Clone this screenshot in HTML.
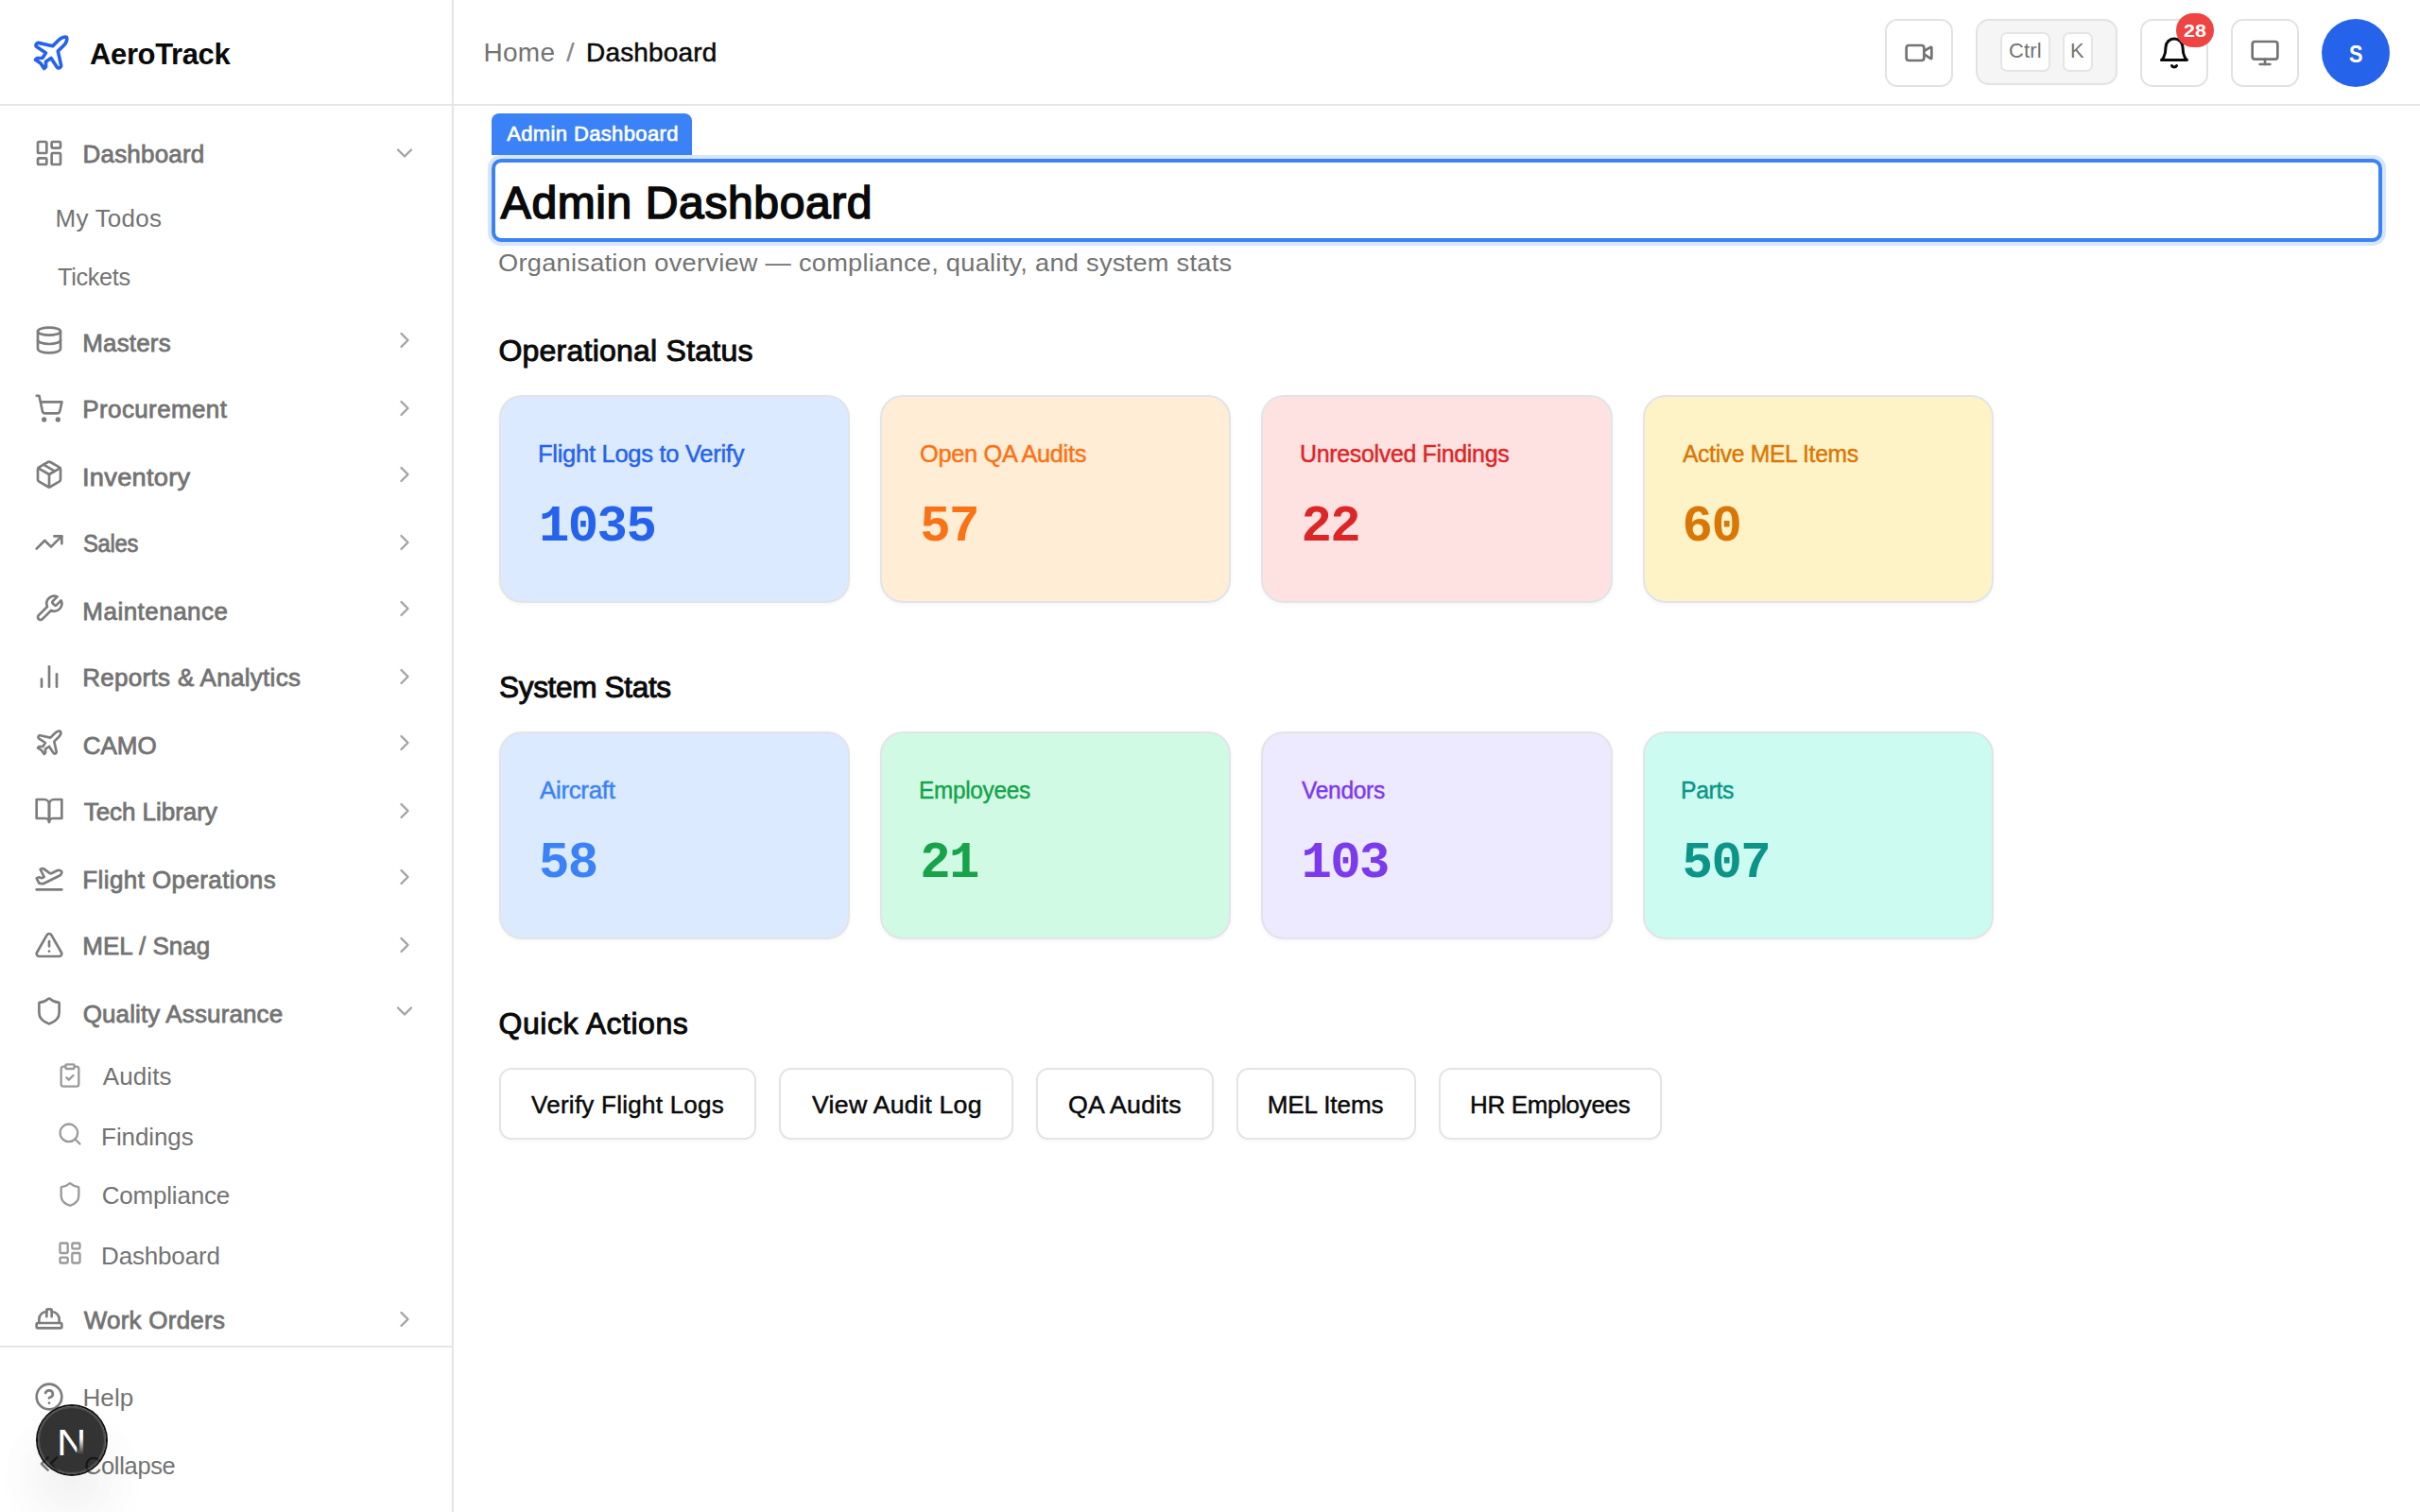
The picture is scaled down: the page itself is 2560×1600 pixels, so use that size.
<!DOCTYPE html>
<html lang="en">
<head>
<meta charset="utf-8">
<meta name="viewport" content="width=2560">
<title>AeroTrack — Admin Dashboard</title>
<style>
html,body{margin:0;padding:0;background:#fff}
body{width:2560px;height:1600px;overflow:hidden;font-family:"Liberation Sans",sans-serif}
#app{position:relative;width:2560px;height:1600px;overflow:hidden;background:#fff}
.t{position:absolute;line-height:1;white-space:pre;margin:0;font-weight:400;text-decoration:none}
.ic{position:absolute;display:block;overflow:visible}
button{padding:0;margin:0;font:inherit;color:inherit;text-align:left;cursor:pointer}
kbd{font:inherit}
a{color:inherit;text-decoration:none}
.ln{position:absolute;background:#e5e5e5}
.hb{position:absolute;box-sizing:border-box;width:72px;height:72px;top:20px;border:2px solid #e2e2e2;border-radius:13px;background:#fff}
.kbd{position:absolute;box-sizing:border-box;top:34px;height:42px;border:2px solid #e5e5e5;border-radius:7px;background:#fff}
.card{position:absolute;box-sizing:border-box;width:371.2px;height:220px;border:2px solid #e2e4e8;border-radius:24px;box-shadow:0 2px 4px rgba(0,0,0,.04)}
.qa{position:absolute;box-sizing:border-box;top:1130px;height:76px;border:2px solid #e4e4e4;border-radius:13px;background:#fff;box-shadow:0 2px 3px rgba(0,0,0,.03)}
</style>
</head>
<body>
<div id="app">
<aside>
<div class="ln" style="left:478px;top:0;width:2px;height:1600px"></div>
<div class="brand"><svg class="ic" style="left:32px;top:34px" width="44" height="44" viewBox="0 0 24 24" fill="none" stroke="#2563eb" stroke-width="2" stroke-linecap="round" stroke-linejoin="round"><path d="M17.8 19.2 16 11l3.5-3.5C21 6 21.5 4 21 3c-1-.5-3 0-4.5 1.5L13 8 4.8 6.2c-.5-.1-.9.1-1.1.5l-.3.5c-.2.5-.1 1 .3 1.3L9 12l-2 3H4l-1 1 3 2 2 3 1-1v-3l3-2 3.5 5.3c.3.4.8.5 1.3.3l.5-.2c.4-.3.6-.7.5-1.2z"/></svg><span class="t" style="left:95.4px;top:40.7px;font-size:32px;letter-spacing:-0.38px;color:#0a0a0a;font-family:'Liberation Sans',sans-serif;font-weight:700;transform:scaleX(0.9691);transform-origin:0 0;">AeroTrack</span></div>
<nav>
<a><svg class="ic" style="left:36px;top:146px" width="32" height="32" viewBox="0 0 24 24" fill="none" stroke="#7d7d7d" stroke-width="2" stroke-linecap="round" stroke-linejoin="round"><rect width="7" height="9" x="3" y="3" rx="1"/><rect width="7" height="5" x="14" y="3" rx="1"/><rect width="7" height="9" x="14" y="12" rx="1"/><rect width="7" height="5" x="3" y="16" rx="1"/></svg><span class="t" style="left:87.5px;top:150.0px;font-size:26px;letter-spacing:0.20px;color:#737373;font-family:'Liberation Sans',sans-serif;-webkit-text-stroke:0.78px currentColor;">Dashboard</span><svg class="ic" style="left:414px;top:148px" width="28" height="28" viewBox="0 0 24 24" fill="none" stroke="#a3a3a3" stroke-width="2" stroke-linecap="round" stroke-linejoin="round"><path d="m6 9 6 6 6-6"/></svg></a>
<a><span class="t" style="left:58.5px;top:218.0px;font-size:26px;letter-spacing:0.24px;color:#737373;font-family:'Liberation Sans',sans-serif;">My Todos</span></a>
<a><span class="t" style="left:60.5px;top:279.5px;font-size:26px;letter-spacing:-0.31px;color:#737373;font-family:'Liberation Sans',sans-serif;transform:scaleX(0.9706);transform-origin:0 0;">Tickets</span></a>
<a><svg class="ic" style="left:36px;top:344px" width="32" height="32" viewBox="0 0 24 24" fill="none" stroke="#7d7d7d" stroke-width="2" stroke-linecap="round" stroke-linejoin="round"><ellipse cx="12" cy="5" rx="9" ry="3"/><path d="M3 5V19A9 3 0 0 0 21 19V5"/><path d="M3 12A9 3 0 0 0 21 12"/></svg><span class="t" style="left:87.3px;top:350.0px;font-size:26px;letter-spacing:0.15px;color:#737373;font-family:'Liberation Sans',sans-serif;-webkit-text-stroke:0.78px currentColor;">Masters</span><svg class="ic" style="left:414px;top:346px" width="28" height="28" viewBox="0 0 24 24" fill="none" stroke="#a3a3a3" stroke-width="2" stroke-linecap="round" stroke-linejoin="round"><path d="m9 18 6-6-6-6"/></svg></a>
<a><svg class="ic" style="left:36px;top:416px" width="32" height="32" viewBox="0 0 24 24" fill="none" stroke="#7d7d7d" stroke-width="2" stroke-linecap="round" stroke-linejoin="round"><circle cx="8" cy="21" r="1"/><circle cx="19" cy="21" r="1"/><path d="M2.05 2.05h2l2.66 12.42a2 2 0 0 0 2 1.58h9.78a2 2 0 0 0 1.95-1.57l1.65-7.43H5.12"/></svg><span class="t" style="left:87.3px;top:420.0px;font-size:26px;letter-spacing:0.38px;color:#737373;font-family:'Liberation Sans',sans-serif;-webkit-text-stroke:0.78px currentColor;">Procurement</span><svg class="ic" style="left:414px;top:418px" width="28" height="28" viewBox="0 0 24 24" fill="none" stroke="#a3a3a3" stroke-width="2" stroke-linecap="round" stroke-linejoin="round"><path d="m9 18 6-6-6-6"/></svg></a>
<a><svg class="ic" style="left:36px;top:486px" width="32" height="32" viewBox="0 0 24 24" fill="none" stroke="#7d7d7d" stroke-width="2" stroke-linecap="round" stroke-linejoin="round"><path d="m7.5 4.27 9 5.15"/><path d="M21 8a2 2 0 0 0-1-1.73l-7-4a2 2 0 0 0-2 0l-7 4A2 2 0 0 0 3 8v8a2 2 0 0 0 1 1.73l7 4a2 2 0 0 0 2 0l7-4A2 2 0 0 0 21 16Z"/><path d="m3.3 7 8.7 5 8.7-5"/><path d="M12 22V12"/></svg><span class="t" style="left:87.2px;top:492.0px;font-size:26px;letter-spacing:0.26px;color:#737373;font-family:'Liberation Sans',sans-serif;-webkit-text-stroke:0.78px currentColor;transform:scaleX(1.0469);transform-origin:0 0;">Inventory</span><svg class="ic" style="left:414px;top:488px" width="28" height="28" viewBox="0 0 24 24" fill="none" stroke="#a3a3a3" stroke-width="2" stroke-linecap="round" stroke-linejoin="round"><path d="m9 18 6-6-6-6"/></svg></a>
<a><svg class="ic" style="left:36px;top:558px" width="32" height="32" viewBox="0 0 24 24" fill="none" stroke="#7d7d7d" stroke-width="2" stroke-linecap="round" stroke-linejoin="round"><polyline points="22 7 13.5 15.5 8.5 10.5 2 17"/><polyline points="16 7 22 7 22 13"/></svg><span class="t" style="left:88.4px;top:561.5px;font-size:26px;letter-spacing:-0.31px;color:#737373;font-family:'Liberation Sans',sans-serif;-webkit-text-stroke:0.78px currentColor;transform:scaleX(0.9163);transform-origin:0 0;">Sales</span><svg class="ic" style="left:414px;top:560px" width="28" height="28" viewBox="0 0 24 24" fill="none" stroke="#a3a3a3" stroke-width="2" stroke-linecap="round" stroke-linejoin="round"><path d="m9 18 6-6-6-6"/></svg></a>
<a><svg class="ic" style="left:36px;top:628px" width="32" height="32" viewBox="0 0 24 24" fill="none" stroke="#7d7d7d" stroke-width="2" stroke-linecap="round" stroke-linejoin="round"><path d="M14.7 6.3a1 1 0 0 0 0 1.4l1.6 1.6a1 1 0 0 0 1.4 0l3.77-3.77a6 6 0 0 1-7.94 7.94l-6.91 6.91a2.12 2.12 0 0 1-3-3l6.91-6.91a6 6 0 0 1 7.94-7.94l-3.76 3.76z"/></svg><span class="t" style="left:87.3px;top:633.5px;font-size:26px;letter-spacing:0.48px;color:#737373;font-family:'Liberation Sans',sans-serif;-webkit-text-stroke:0.78px currentColor;">Maintenance</span><svg class="ic" style="left:414px;top:630px" width="28" height="28" viewBox="0 0 24 24" fill="none" stroke="#a3a3a3" stroke-width="2" stroke-linecap="round" stroke-linejoin="round"><path d="m9 18 6-6-6-6"/></svg></a>
<a><svg class="ic" style="left:36px;top:700px" width="32" height="32" viewBox="0 0 24 24" fill="none" stroke="#7d7d7d" stroke-width="2" stroke-linecap="round" stroke-linejoin="round"><line x1="18" x2="18" y1="20" y2="10"/><line x1="12" x2="12" y1="20" y2="4"/><line x1="6" x2="6" y1="20" y2="14"/></svg><span class="t" style="left:87.3px;top:704.0px;font-size:26px;letter-spacing:0.29px;color:#737373;font-family:'Liberation Sans',sans-serif;-webkit-text-stroke:0.78px currentColor;">Reports &amp; Analytics</span><svg class="ic" style="left:414px;top:702px" width="28" height="28" viewBox="0 0 24 24" fill="none" stroke="#a3a3a3" stroke-width="2" stroke-linecap="round" stroke-linejoin="round"><path d="m9 18 6-6-6-6"/></svg></a>
<a><svg class="ic" style="left:36px;top:770px" width="32" height="32" viewBox="0 0 24 24" fill="none" stroke="#7d7d7d" stroke-width="2" stroke-linecap="round" stroke-linejoin="round"><path d="M17.8 19.2 16 11l3.5-3.5C21 6 21.5 4 21 3c-1-.5-3 0-4.5 1.5L13 8 4.8 6.2c-.5-.1-.9.1-1.1.5l-.3.5c-.2.5-.1 1 .3 1.3L9 12l-2 3H4l-1 1 3 2 2 3 1-1v-3l3-2 3.5 5.3c.3.4.8.5 1.3.3l.5-.2c.4-.3.6-.7.5-1.2z"/></svg><span class="t" style="left:87.7px;top:775.5px;font-size:26px;letter-spacing:-0.00px;color:#737373;font-family:'Liberation Sans',sans-serif;-webkit-text-stroke:0.78px currentColor;">CAMO</span><svg class="ic" style="left:414px;top:772px" width="28" height="28" viewBox="0 0 24 24" fill="none" stroke="#a3a3a3" stroke-width="2" stroke-linecap="round" stroke-linejoin="round"><path d="m9 18 6-6-6-6"/></svg></a>
<a><svg class="ic" style="left:36px;top:842px" width="32" height="32" viewBox="0 0 24 24" fill="none" stroke="#7d7d7d" stroke-width="2" stroke-linecap="round" stroke-linejoin="round"><path d="M2 3h6a4 4 0 0 1 4 4v14a3 3 0 0 0-3-3H2z"/><path d="M22 3h-6a4 4 0 0 0-4 4v14a3 3 0 0 1 3-3h7z"/></svg><span class="t" style="left:88.7px;top:845.5px;font-size:26px;letter-spacing:-0.05px;color:#737373;font-family:'Liberation Sans',sans-serif;-webkit-text-stroke:0.78px currentColor;">Tech Library</span><svg class="ic" style="left:414px;top:844px" width="28" height="28" viewBox="0 0 24 24" fill="none" stroke="#a3a3a3" stroke-width="2" stroke-linecap="round" stroke-linejoin="round"><path d="m9 18 6-6-6-6"/></svg></a>
<a><svg class="ic" style="left:36px;top:912px" width="32" height="32" viewBox="0 0 24 24" fill="none" stroke="#7d7d7d" stroke-width="2" stroke-linecap="round" stroke-linejoin="round"><path d="M2 22h20"/><path d="M6.36 17.4 4 17l-2-4 1.1-.55a2 2 0 0 1 1.8 0l.17.1a2 2 0 0 0 1.8 0L8 12 5 6l.9-.45a2 2 0 0 1 2.09.2l4.02 3a2 2 0 0 0 2.1.2l4.19-2.06a2.41 2.41 0 0 1 1.73-.17L21 7a1.4 1.4 0 0 1 .87 1.99l-.38.76c-.23.46-.6.84-1.07 1.08L7.58 17.2a2 2 0 0 1-1.22.18Z"/></svg><span class="t" style="left:87.3px;top:917.5px;font-size:26px;letter-spacing:0.40px;color:#737373;font-family:'Liberation Sans',sans-serif;-webkit-text-stroke:0.78px currentColor;">Flight Operations</span><svg class="ic" style="left:414px;top:914px" width="28" height="28" viewBox="0 0 24 24" fill="none" stroke="#a3a3a3" stroke-width="2" stroke-linecap="round" stroke-linejoin="round"><path d="m9 18 6-6-6-6"/></svg></a>
<a><svg class="ic" style="left:36px;top:984px" width="32" height="32" viewBox="0 0 24 24" fill="none" stroke="#7d7d7d" stroke-width="2" stroke-linecap="round" stroke-linejoin="round"><path d="m21.73 18-8-14a2 2 0 0 0-3.48 0l-8 14A2 2 0 0 0 4 21h16a2 2 0 0 0 1.73-3"/><path d="M12 9v4"/><path d="M12 17h.01"/></svg><span class="t" style="left:87.3px;top:987.7px;font-size:26px;letter-spacing:-0.01px;color:#737373;font-family:'Liberation Sans',sans-serif;-webkit-text-stroke:0.78px currentColor;">MEL / Snag</span><svg class="ic" style="left:414px;top:986px" width="28" height="28" viewBox="0 0 24 24" fill="none" stroke="#a3a3a3" stroke-width="2" stroke-linecap="round" stroke-linejoin="round"><path d="m9 18 6-6-6-6"/></svg></a>
<a><svg class="ic" style="left:36px;top:1054px" width="32" height="32" viewBox="0 0 24 24" fill="none" stroke="#7d7d7d" stroke-width="2" stroke-linecap="round" stroke-linejoin="round"><path d="M20 13c0 5-3.5 7.5-7.66 8.95a1 1 0 0 1-.67-.01C7.5 20.5 4 18 4 13V6a1 1 0 0 1 1-1c2 0 4.5-1.2 6.24-2.72a1.17 1.17 0 0 1 1.52 0C14.51 3.81 17 5 19 5a1 1 0 0 1 1 1z"/></svg><span class="t" style="left:87.7px;top:1060.0px;font-size:26px;letter-spacing:0.12px;color:#737373;font-family:'Liberation Sans',sans-serif;-webkit-text-stroke:0.78px currentColor;">Quality Assurance</span><svg class="ic" style="left:414px;top:1056px" width="28" height="28" viewBox="0 0 24 24" fill="none" stroke="#a3a3a3" stroke-width="2" stroke-linecap="round" stroke-linejoin="round"><path d="m6 9 6 6 6-6"/></svg></a>
<a><svg class="ic" style="left:60px;top:1124px" width="28" height="28" viewBox="0 0 24 24" fill="none" stroke="#9a9a9a" stroke-width="2" stroke-linecap="round" stroke-linejoin="round"><rect width="8" height="4" x="8" y="2" rx="1" ry="1"/><path d="M16 4h2a2 2 0 0 1 2 2v14a2 2 0 0 1-2 2H6a2 2 0 0 1-2-2V6a2 2 0 0 1 2-2h2"/><path d="m9 14 2 2 4-4"/></svg><span class="t" style="left:108.7px;top:1125.6px;font-size:26px;letter-spacing:0.10px;color:#737373;font-family:'Liberation Sans',sans-serif;">Audits</span></a>
<a><svg class="ic" style="left:60px;top:1186px" width="28" height="28" viewBox="0 0 24 24" fill="none" stroke="#9a9a9a" stroke-width="2" stroke-linecap="round" stroke-linejoin="round"><circle cx="11" cy="11" r="8"/><path d="m21 21-4.3-4.3"/></svg><span class="t" style="left:107.1px;top:1189.7px;font-size:26px;letter-spacing:-0.10px;color:#737373;font-family:'Liberation Sans',sans-serif;">Findings</span></a>
<a><svg class="ic" style="left:60px;top:1250px" width="28" height="28" viewBox="0 0 24 24" fill="none" stroke="#9a9a9a" stroke-width="2" stroke-linecap="round" stroke-linejoin="round"><path d="M20 13c0 5-3.5 7.5-7.66 8.95a1 1 0 0 1-.67-.01C7.5 20.5 4 18 4 13V6a1 1 0 0 1 1-1c2 0 4.5-1.2 6.24-2.72a1.17 1.17 0 0 1 1.52 0C14.51 3.81 17 5 19 5a1 1 0 0 1 1 1z"/></svg><span class="t" style="left:107.7px;top:1252.0px;font-size:26px;letter-spacing:-0.19px;color:#737373;font-family:'Liberation Sans',sans-serif;">Compliance</span></a>
<a><svg class="ic" style="left:60px;top:1312px" width="28" height="28" viewBox="0 0 24 24" fill="none" stroke="#9a9a9a" stroke-width="2" stroke-linecap="round" stroke-linejoin="round"><rect width="7" height="9" x="3" y="3" rx="1"/><rect width="7" height="5" x="14" y="3" rx="1"/><rect width="7" height="9" x="14" y="12" rx="1"/><rect width="7" height="5" x="3" y="16" rx="1"/></svg><span class="t" style="left:107.1px;top:1315.5px;font-size:26px;letter-spacing:-0.18px;color:#737373;font-family:'Liberation Sans',sans-serif;">Dashboard</span></a>
<a><svg class="ic" style="left:36px;top:1380px" width="32" height="32" viewBox="0 0 24 24" fill="none" stroke="#7d7d7d" stroke-width="2" stroke-linecap="round" stroke-linejoin="round"><path d="M10 10V5a1 1 0 0 1 1-1h2a1 1 0 0 1 1 1v5"/><path d="M14 6a6 6 0 0 1 6 6v3"/><path d="M4 15v-3a6 6 0 0 1 6-6"/><rect x="2" y="15" width="20" height="4" rx="1"/></svg><span class="t" style="left:88.7px;top:1383.6px;font-size:26px;letter-spacing:0.24px;color:#737373;font-family:'Liberation Sans',sans-serif;-webkit-text-stroke:0.78px currentColor;">Work Orders</span><svg class="ic" style="left:414px;top:1382px" width="28" height="28" viewBox="0 0 24 24" fill="none" stroke="#a3a3a3" stroke-width="2" stroke-linecap="round" stroke-linejoin="round"><path d="m9 18 6-6-6-6"/></svg></a>
</nav>
<div class="ln" style="left:0;top:1424px;width:478px;height:2px"></div>
<div class="foot"><a><svg class="ic" style="left:36px;top:1462px" width="32" height="32" viewBox="0 0 24 24" fill="none" stroke="#7d7d7d" stroke-width="2" stroke-linecap="round" stroke-linejoin="round"><circle cx="12" cy="12" r="10"/><path d="M9.09 9a3 3 0 0 1 5.83 1c0 2-3 3-3 3"/><path d="M12 17h.01"/></svg><span class="t" style="left:87.5px;top:1466.0px;font-size:26px;letter-spacing:0.07px;color:#737373;font-family:'Liberation Sans',sans-serif;">Help</span></a>
<a><svg class="ic" style="left:36px;top:1533px" width="32" height="32" viewBox="0 0 24 24" fill="none" stroke="#7d7d7d" stroke-width="2" stroke-linecap="round" stroke-linejoin="round"><path d="m11 17-5-5 5-5"/><path d="m18 17-5-5 5-5"/></svg><span class="t" style="left:88.5px;top:1537.5px;font-size:26px;letter-spacing:-0.31px;color:#737373;font-family:'Liberation Sans',sans-serif;transform:scaleX(0.9771);transform-origin:0 0;">Collapse</span></a>
</div>
</aside>
<header>
<div class="ln" style="left:0;top:110px;width:2560px;height:2px"></div>
<div class="crumbs"><span class="t" style="left:511.6px;top:42.1px;font-size:28px;letter-spacing:0.23px;color:#737373;font-family:'Liberation Sans',sans-serif;">Home</span><span class="t" style="left:599.0px;top:42.1px;font-size:28px;letter-spacing:0.00px;color:#8a8a8a;font-family:'Liberation Sans',sans-serif;transform:scaleX(1.1250);transform-origin:0 0;">/</span><span class="t" style="left:620.1px;top:42.1px;font-size:28px;letter-spacing:0.16px;color:#0a0a0a;font-family:'Liberation Sans',sans-serif;-webkit-text-stroke:0.50px currentColor;">Dashboard</span></div>
<button class="hb" style="left:1994px"><svg class="ic" style="left:18px;top:18px" width="32" height="32" viewBox="0 0 24 24" fill="none" stroke="#737373" stroke-width="2" stroke-linecap="round" stroke-linejoin="round"><path d="m16 13 5.223 3.482a.5.5 0 0 0 .777-.416V7.87a.5.5 0 0 0-.752-.432L16 10.5"/><rect x="2" y="6" width="14" height="12" rx="2"/></svg></button>
<div class="hb" style="left:2090px;width:150px;height:70px;background:#f5f5f5;border-color:#e3e3e3;border-radius:14px"></div><kbd class="kbd" style="left:2116px;width:53px"><span class="t" style="left:7.0px;top:7.0px;font-size:22px;letter-spacing:0.17px;color:#737373;font-family:'Liberation Sans',sans-serif;">Ctrl</span></kbd><kbd class="kbd" style="left:2182px;width:32px"><span class="t" style="left:6.2px;top:7.0px;font-size:22px;letter-spacing:0.00px;color:#737373;font-family:'Liberation Sans',sans-serif;transform:scaleX(0.9917);transform-origin:0 0;">K</span></kbd>
<button class="hb" style="left:2264px"><svg class="ic" style="left:16px;top:16px" width="36" height="36" viewBox="0 0 24 24" fill="none" stroke="#0a0a0a" stroke-width="2" stroke-linecap="round" stroke-linejoin="round"><path d="M6 8a6 6 0 0 1 12 0c0 7 3 9 3 9H3s3-2 3-9"/><path d="M10.3 21a1.94 1.94 0 0 0 3.4 0"/></svg></button><div style="position:absolute;left:2302px;top:14px;width:40px;height:36px;border-radius:18px;background:#ef4444"><span class="t" style="left:7.9px;top:9.8px;font-size:18.5px;letter-spacing:0.18px;color:#fff;font-family:'Liberation Sans',sans-serif;font-weight:700;transform:scaleX(1.1572);transform-origin:0 0;">28</span></div>
<button class="hb" style="left:2360px"><svg class="ic" style="left:18px;top:18px" width="32" height="32" viewBox="0 0 24 24" fill="none" stroke="#737373" stroke-width="2" stroke-linecap="round" stroke-linejoin="round"><rect width="20" height="14" x="2" y="3" rx="2"/><line x1="8" x2="16" y1="21" y2="21"/><line x1="12" x2="12" y1="17" y2="21"/></svg></button>
<div style="position:absolute;left:2456px;top:20px;width:72px;height:72px;border-radius:50%;background:#2563eb"><span class="t" style="left:28.6px;top:24.5px;font-size:25px;letter-spacing:0.00px;color:#fff;font-family:'Liberation Sans',sans-serif;font-weight:700;transform:scaleX(0.8667);transform-origin:0 0;">S</span></div>
</header>
<main>
<div style="position:absolute;left:520px;top:120px;width:212px;height:44px;border-radius:8px 8px 0 0;background:#3b82f6"><span class="t" style="left:16.2px;top:11.0px;font-size:22px;letter-spacing:0.37px;color:#fff;font-family:'Liberation Sans',sans-serif;-webkit-text-stroke:0.66px currentColor;">Admin Dashboard</span></div>
<div style="position:absolute;box-sizing:border-box;left:520px;top:168px;width:2000px;height:88px;border:4px solid #3b82f6;border-radius:10px;box-shadow:0 0 0 4px rgba(59,130,246,.2)"></div>
<h1 class="t" style="left:529.8px;top:191.2px;font-size:48px;letter-spacing:0.61px;color:#0a0a0a;font-family:'Liberation Sans',sans-serif;-webkit-text-stroke:1.63px currentColor;">Admin Dashboard</h1>
<p class="t" style="left:527.4px;top:265.3px;font-size:26px;letter-spacing:0.26px;color:#737373;font-family:'Liberation Sans',sans-serif;transform:scaleX(1.0460);transform-origin:0 0;">Organisation overview — compliance, quality, and system stats</p>
<section><h2 class="t" style="left:527.4px;top:354.9px;font-size:32px;letter-spacing:0.24px;color:#0a0a0a;font-family:'Liberation Sans',sans-serif;-webkit-text-stroke:0.96px currentColor;">Operational Status</h2>
<div class="card" style="left:528.0px;top:418px;background:#dbeafe"><span class="t" style="left:39.0px;top:47.0px;font-size:26px;letter-spacing:-0.31px;color:#2563eb;font-family:'Liberation Sans',sans-serif;-webkit-text-stroke:0.47px currentColor;transform:scaleX(0.9834);transform-origin:0 0;">Flight Logs to Verify</span><span class="t" style="left:40.0px;top:110.9px;font-size:54px;letter-spacing:-1.60px;color:#2563eb;font-family:'Liberation Mono',monospace;font-weight:700;">1035</span></div>
<div class="card" style="left:931.2px;top:418px;background:#ffedd5"><span class="t" style="left:39.6px;top:47.0px;font-size:26px;letter-spacing:-0.31px;color:#f97316;font-family:'Liberation Sans',sans-serif;-webkit-text-stroke:0.47px currentColor;transform:scaleX(0.9742);transform-origin:0 0;">Open QA Audits</span><span class="t" style="left:40.0px;top:110.9px;font-size:54px;letter-spacing:-1.60px;color:#f97316;font-family:'Liberation Mono',monospace;font-weight:700;">57</span></div>
<div class="card" style="left:1334.4px;top:418px;background:#fee2e2"><span class="t" style="left:38.8px;top:47.0px;font-size:26px;letter-spacing:-0.31px;color:#dc2626;font-family:'Liberation Sans',sans-serif;-webkit-text-stroke:0.47px currentColor;transform:scaleX(0.9578);transform-origin:0 0;">Unresolved Findings</span><span class="t" style="left:40.0px;top:110.9px;font-size:54px;letter-spacing:-1.60px;color:#dc2626;font-family:'Liberation Mono',monospace;font-weight:700;">22</span></div>
<div class="card" style="left:1737.6px;top:418px;background:#fef3c7"><span class="t" style="left:40.4px;top:47.0px;font-size:26px;letter-spacing:-0.31px;color:#d97706;font-family:'Liberation Sans',sans-serif;-webkit-text-stroke:0.47px currentColor;transform:scaleX(0.9459);transform-origin:0 0;">Active MEL Items</span><span class="t" style="left:40.0px;top:110.9px;font-size:54px;letter-spacing:-1.60px;color:#d97706;font-family:'Liberation Mono',monospace;font-weight:700;">60</span></div>
</section>
<section><h2 class="t" style="left:528.0px;top:710.9px;font-size:32px;letter-spacing:-0.38px;color:#0a0a0a;font-family:'Liberation Sans',sans-serif;-webkit-text-stroke:0.96px currentColor;transform:scaleX(0.9881);transform-origin:0 0;">System Stats</h2>
<div class="card" style="left:528.0px;top:774px;background:#dbeafe"><span class="t" style="left:40.5px;top:47.0px;font-size:26px;letter-spacing:-0.31px;color:#3b82f6;font-family:'Liberation Sans',sans-serif;-webkit-text-stroke:0.47px currentColor;transform:scaleX(0.9961);transform-origin:0 0;">Aircraft</span><span class="t" style="left:40.0px;top:110.9px;font-size:54px;letter-spacing:-1.60px;color:#3b82f6;font-family:'Liberation Mono',monospace;font-weight:700;">58</span></div>
<div class="card" style="left:931.2px;top:774px;background:#d1fae5"><span class="t" style="left:38.7px;top:47.0px;font-size:26px;letter-spacing:-0.31px;color:#16a34a;font-family:'Liberation Sans',sans-serif;-webkit-text-stroke:0.47px currentColor;transform:scaleX(0.9360);transform-origin:0 0;">Employees</span><span class="t" style="left:40.0px;top:110.9px;font-size:54px;letter-spacing:-1.60px;color:#16a34a;font-family:'Liberation Mono',monospace;font-weight:700;">21</span></div>
<div class="card" style="left:1334.4px;top:774px;background:#ede9fe"><span class="t" style="left:40.7px;top:47.0px;font-size:26px;letter-spacing:-0.31px;color:#7c3aed;font-family:'Liberation Sans',sans-serif;-webkit-text-stroke:0.47px currentColor;transform:scaleX(0.9428);transform-origin:0 0;">Vendors</span><span class="t" style="left:40.0px;top:110.9px;font-size:54px;letter-spacing:-1.60px;color:#7c3aed;font-family:'Liberation Mono',monospace;font-weight:700;">103</span></div>
<div class="card" style="left:1737.6px;top:774px;background:#ccfbf1"><span class="t" style="left:38.5px;top:47.0px;font-size:26px;letter-spacing:-0.31px;color:#0d9488;font-family:'Liberation Sans',sans-serif;-webkit-text-stroke:0.47px currentColor;transform:scaleX(0.9480);transform-origin:0 0;">Parts</span><span class="t" style="left:40.0px;top:110.9px;font-size:54px;letter-spacing:-1.60px;color:#0d9488;font-family:'Liberation Mono',monospace;font-weight:700;">507</span></div>
</section>
<section><h2 class="t" style="left:527.6px;top:1066.9px;font-size:32px;letter-spacing:0.52px;color:#0a0a0a;font-family:'Liberation Sans',sans-serif;-webkit-text-stroke:0.96px currentColor;">Quick Actions</h2>
<button class="qa" style="left:528px;width:272px"><span class="t" style="left:32.1px;top:24.0px;font-size:26px;letter-spacing:0.25px;color:#0a0a0a;font-family:'Liberation Sans',sans-serif;-webkit-text-stroke:0.47px currentColor;">Verify Flight Logs</span></button>
<button class="qa" style="left:824px;width:247.5px"><span class="t" style="left:32.9px;top:24.0px;font-size:26px;letter-spacing:0.26px;color:#0a0a0a;font-family:'Liberation Sans',sans-serif;-webkit-text-stroke:0.47px currentColor;transform:scaleX(1.0266);transform-origin:0 0;">View Audit Log</span></button>
<button class="qa" style="left:1096px;width:187.5px"><span class="t" style="left:31.5px;top:24.0px;font-size:26px;letter-spacing:0.26px;color:#0a0a0a;font-family:'Liberation Sans',sans-serif;-webkit-text-stroke:0.47px currentColor;transform:scaleX(1.0288);transform-origin:0 0;">QA Audits</span></button>
<button class="qa" style="left:1308px;width:189.5px"><span class="t" style="left:30.7px;top:24.0px;font-size:26px;letter-spacing:-0.06px;color:#0a0a0a;font-family:'Liberation Sans',sans-serif;-webkit-text-stroke:0.47px currentColor;">MEL Items</span></button>
<button class="qa" style="left:1522px;width:236px"><span class="t" style="left:30.9px;top:24.0px;font-size:26px;letter-spacing:-0.31px;color:#0a0a0a;font-family:'Liberation Sans',sans-serif;-webkit-text-stroke:0.47px currentColor;transform:scaleX(0.9978);transform-origin:0 0;">HR Employees</span></button>
</section>
</main>
<div style="position:absolute;left:40px;top:1488px;width:72px;height:72px;border-radius:50%;background:rgba(0,0,0,.8);box-shadow:0 0 0 2px #111,inset 0 0 0 2px rgba(255,255,255,.14),0 32px 64px -16px rgba(0,0,0,.16),0 44px 64px 8px rgba(0,0,0,.03)"><span class="t" style="left:20.2px;top:19.2px;font-size:39px;letter-spacing:0.00px;color:#fff;font-family:'Liberation Sans',sans-serif;transform:scaleX(1.1136);transform-origin:0 0;">N</span></div><div style="position:absolute;left:81px;top:1522px;width:9px;height:20px;background:linear-gradient(to bottom,rgba(51,51,51,0),#333 85%)"></div>
</div>
<script>(function(){var w=window.innerWidth||2560;if(w>0&&w<2500){document.getElementById("app").style.zoom=w/2560;document.body.style.width=w+"px";document.body.style.height=Math.round(1600*w/2560)+"px";}})();</script>
</body>
</html>
